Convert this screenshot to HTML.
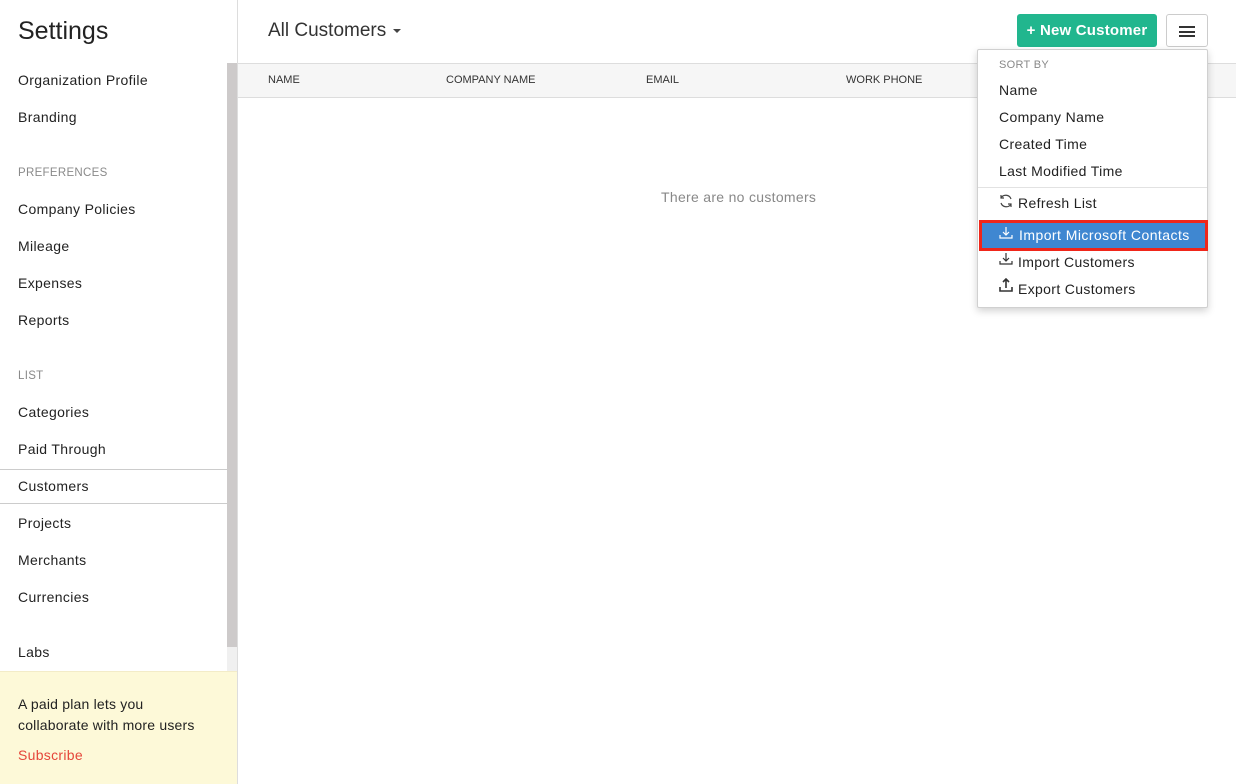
<!DOCTYPE html>
<html><head><meta charset="utf-8">
<style>
*{box-sizing:border-box;margin:0;padding:0}
body{width:1236px;height:784px;overflow:hidden;background:#fff;font-family:"Liberation Sans",sans-serif;color:#222;position:relative}
.side{position:absolute;left:0;top:0;width:238px;height:784px;border-right:1px solid #ddd;background:#fff}
.side h1{position:absolute;left:18px;top:17px;font-size:25px;font-weight:normal;color:#222}
.item{position:absolute;left:18px;font-size:14px;color:#222;letter-spacing:.35px}
.hd{position:absolute;left:18px;font-size:11.5px;color:#8a8a8a;letter-spacing:.3px}
.scroll{position:absolute;left:227px;top:63px;width:10px;height:584px;background:#cdcaca}
.scroll2{position:absolute;left:227px;top:647px;width:10px;height:24px;background:#f0f0f0}
.cust{position:absolute;left:0;top:469px;width:227px;height:35px;border-top:1px solid #ccc;border-bottom:1px solid #ccc}
.promo{position:absolute;left:0;top:671px;width:237px;height:113px;background:#fdf9d8;border-top:1px solid #f3ecc8}
.promo p{position:absolute;left:18px;top:22px;font-size:14px;line-height:21px;color:#222;letter-spacing:.2px}
.promo a{position:absolute;left:18px;top:75px;font-size:14px;color:#e5463a;letter-spacing:.3px}
.title{position:absolute;left:268px;top:20px;font-size:19px;color:#333}
.caret{display:inline-block;width:0;height:0;border-left:4px solid transparent;border-right:4px solid transparent;border-top:4px solid #444;vertical-align:middle;margin-left:7px}
.thead{position:absolute;left:238px;top:63px;width:998px;height:35px;background:#f6f6f6;border-top:1px solid #ddd;border-bottom:1px solid #ddd}
.th{position:absolute;top:10px;font-size:11px;color:#333}
.empty{position:absolute;left:661px;top:189px;font-size:14px;color:#888;letter-spacing:.3px}
.btn{position:absolute;left:1017px;top:14px;width:140px;height:33px;background:#21b68e;border-radius:3px;color:#fff;font-size:15px;font-weight:bold;line-height:33px;text-align:center;letter-spacing:.2px}
.mbtn{position:absolute;left:1166px;top:14px;width:42px;height:33px;border:1px solid #ccc;border-radius:3px;background:#fff}
.mbtn i{position:absolute;left:12px;width:16px;height:2px;background:#333}
.menu{position:absolute;left:977px;top:49px;width:231px;height:259px;background:#fff;border:1px solid #d0d0d0;box-shadow:0 3px 8px rgba(0,0,0,.18);border-radius:2px}
.mi{position:absolute;left:21px;font-size:14px;color:#222;letter-spacing:.35px}
.hl{position:absolute;left:1px;top:170px;width:229px;height:31px;background:#3f87d1;border:3px solid #f0261a;color:#fff}
svg{position:absolute}
</style></head><body>
<div class="side">
<h1>Settings</h1>
<div class="item" style="top:72px">Organization Profile</div>
<div class="item" style="top:109px">Branding</div>
<div class="hd" style="top:167px">PREFERENCES</div>
<div class="item" style="top:201px">Company Policies</div>
<div class="item" style="top:238px">Mileage</div>
<div class="item" style="top:275px">Expenses</div>
<div class="item" style="top:312px">Reports</div>
<div class="hd" style="top:370px">LIST</div>
<div class="item" style="top:404px">Categories</div>
<div class="item" style="top:441px">Paid Through</div>
<div class="cust"></div>
<div class="item" style="top:478px">Customers</div>
<div class="item" style="top:515px">Projects</div>
<div class="item" style="top:552px">Merchants</div>
<div class="item" style="top:589px">Currencies</div>
<div class="item" style="top:644px">Labs</div>
<div class="scroll"></div><div class="scroll2"></div>
<div class="promo"><p>A paid plan lets you<br>collaborate with more users</p><a>Subscribe</a></div>
</div>
<div class="title">All Customers<span class="caret"></span></div>
<div class="thead">
<div class="th" style="left:30px">NAME</div>
<div class="th" style="left:208px">COMPANY NAME</div>
<div class="th" style="left:408px">EMAIL</div>
<div class="th" style="left:608px">WORK PHONE</div>
</div>
<div class="empty">There are no customers</div>
<div class="btn">+ New Customer</div>
<div class="mbtn"><i style="top:11px"></i><i style="top:15.5px"></i><i style="top:20px"></i></div>
<div class="menu">
<div class="mi" style="top:9px;font-size:11px;color:#888;letter-spacing:.3px">SORT BY</div>
<div class="mi" style="top:32px">Name</div>
<div class="mi" style="top:59px">Company Name</div>
<div class="mi" style="top:86px">Created Time</div>
<div class="mi" style="top:113px">Last Modified Time</div>
<div style="position:absolute;left:0;top:137px;width:229px;height:1px;background:#e2e2e2"></div>
<svg style="left:20px;top:143px" width="16" height="16" viewBox="0 0 16 16" fill="none" stroke="#444" stroke-width="1.2"><path d="M13 6A5.5 5.5 0 0 0 3 5M3 2v3h3M3 10a5.5 5.5 0 0 0 10 1M13 14v-3h-3"/></svg>
<div class="mi" style="top:145px;left:40px">Refresh List</div>
<div class="hl"><svg style="left:17px;top:3px" width="14" height="14" viewBox="0 0 14 14" fill="none" stroke="#fff" stroke-width="1.2"><path d="M7 1v8M4 6l3 3 3-3M1 9v3h12V9"/></svg><span style="position:absolute;left:37px;top:4px;font-size:14px;letter-spacing:.45px">Import Microsoft Contacts</span></div>
<svg style="left:21px;top:202px" width="14" height="14" viewBox="0 0 14 14" fill="none" stroke="#333" stroke-width="1.2"><path d="M7 1v8M4 6l3 3 3-3M1 9v3h12V9"/></svg>
<div class="mi" style="top:204px;left:40px">Import Customers</div>
<svg style="left:21px;top:228px" width="14" height="15" viewBox="0 0 14 15" fill="none" stroke="#333" stroke-width="1.6"><path d="M7 10V1M4 4l3-3 3 3M1 9v4h12V9"/></svg>
<div class="mi" style="top:231px;left:40px">Export Customers</div>
</div>
</body></html>
